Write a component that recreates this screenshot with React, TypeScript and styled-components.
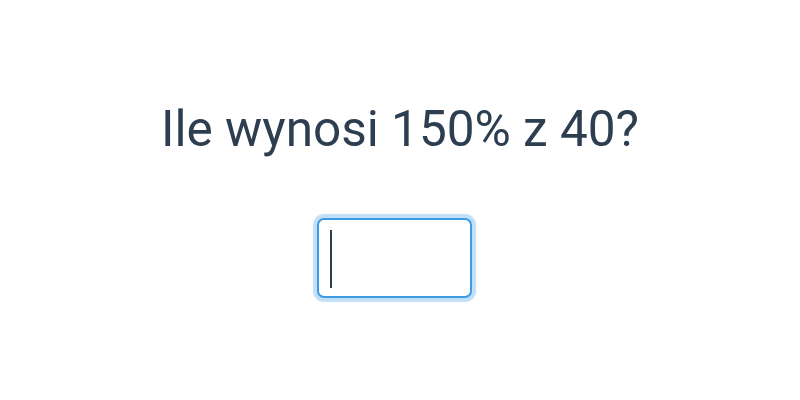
import styled, { createGlobalStyle } from "styled-components"

const GlobalStyle = createGlobalStyle`
    html, body {
        margin: 0;
        background: #fff;
    }
    body {
        font-family: Roboto, "Noto Sans", sans-serif;
        color: #2c3e50;
    }
`

export default function App() {
    return (
        <>
            <GlobalStyle />
            <Quiz>
                <Question>Ile wynosi 150% z 40?</Question>
                <Field>
                    <Answer type="text" />
                    <Caret />
                </Field>
            </Quiz>
        </>
    )
}

const Quiz = styled.div`
    display: flex;
    flex-direction: column;
    align-items: center;
    min-height: 400px;
    box-sizing: border-box;
    padding: 99px 0 40px;
`
const Question = styled.h1`
    margin: 0;
    font-weight: 400;
    font-size: 49.5px;
    line-height: 60px;
`
const Field = styled.div`
    position: relative;
    margin-top: 59px;
    margin-right: 12px;
    display: flex;
`
const Answer = styled.input`
    width: 155px;
    height: 80px;
    box-sizing: border-box;
    border: 2px solid #3d9be3;
    border-radius: 7px;
    padding: 0 12px;
    font-family: inherit;
    font-size: 48px;
    color: #2c3e50;
    caret-color: transparent;
    outline: none;
    box-shadow: 0 0 1px 4px rgba(61, 155, 227, 0.32);
`
// text cursor of the focused field
const Caret = styled.span`
    position: absolute;
    left: 13px;
    top: 12px;
    width: 2px;
    height: 58px;
    background: #2c3e50;
`
